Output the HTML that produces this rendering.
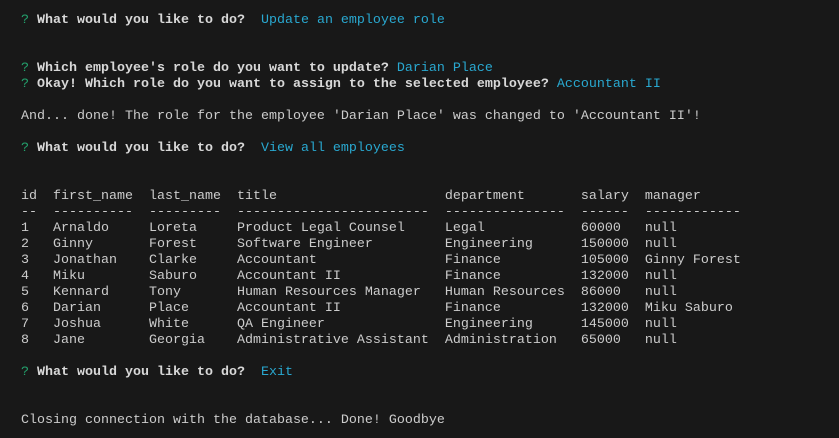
<!DOCTYPE html>
<html><head><meta charset="utf-8"><style>
html,body{margin:0;padding:0;background:#181818;width:839px;height:438px;overflow:hidden}
pre{margin:0;padding:13px 0 0 21px;font-family:"Liberation Mono","DejaVu Sans Mono",monospace;font-size:13.33px;line-height:16px;color:#cccccc;}
.g{color:#23a26d}.c{color:#29a8d0}b{font-weight:bold;color:#d8d8d8}
</style></head><body><pre><span class="g">?</span> <b>What would you like to do?</b>  <span class="c">Update an employee role</span>


<span class="g">?</span> <b>Which employee's role do you want to update?</b> <span class="c">Darian Place</span>
<span class="g">?</span> <b>Okay! Which role do you want to assign to the selected employee?</b> <span class="c">Accountant II</span>

And... done! The role for the employee 'Darian Place' was changed to 'Accountant II'!

<span class="g">?</span> <b>What would you like to do?</b>  <span class="c">View all employees</span>


id  first_name  last_name  title                     department       salary  manager
--  ----------  ---------  ------------------------  ---------------  ------  ------------
1   Arnaldo     Loreta     Product Legal Counsel     Legal            60000   null
2   Ginny       Forest     Software Engineer         Engineering      150000  null
3   Jonathan    Clarke     Accountant                Finance          105000  Ginny Forest
4   Miku        Saburo     Accountant II             Finance          132000  null
5   Kennard     Tony       Human Resources Manager   Human Resources  86000   null
6   Darian      Place      Accountant II             Finance          132000  Miku Saburo
7   Joshua      White      QA Engineer               Engineering      145000  null
8   Jane        Georgia    Administrative Assistant  Administration   65000   null

<span class="g">?</span> <b>What would you like to do?</b>  <span class="c">Exit</span>


Closing connection with the database... Done! Goodbye</pre></body></html>
